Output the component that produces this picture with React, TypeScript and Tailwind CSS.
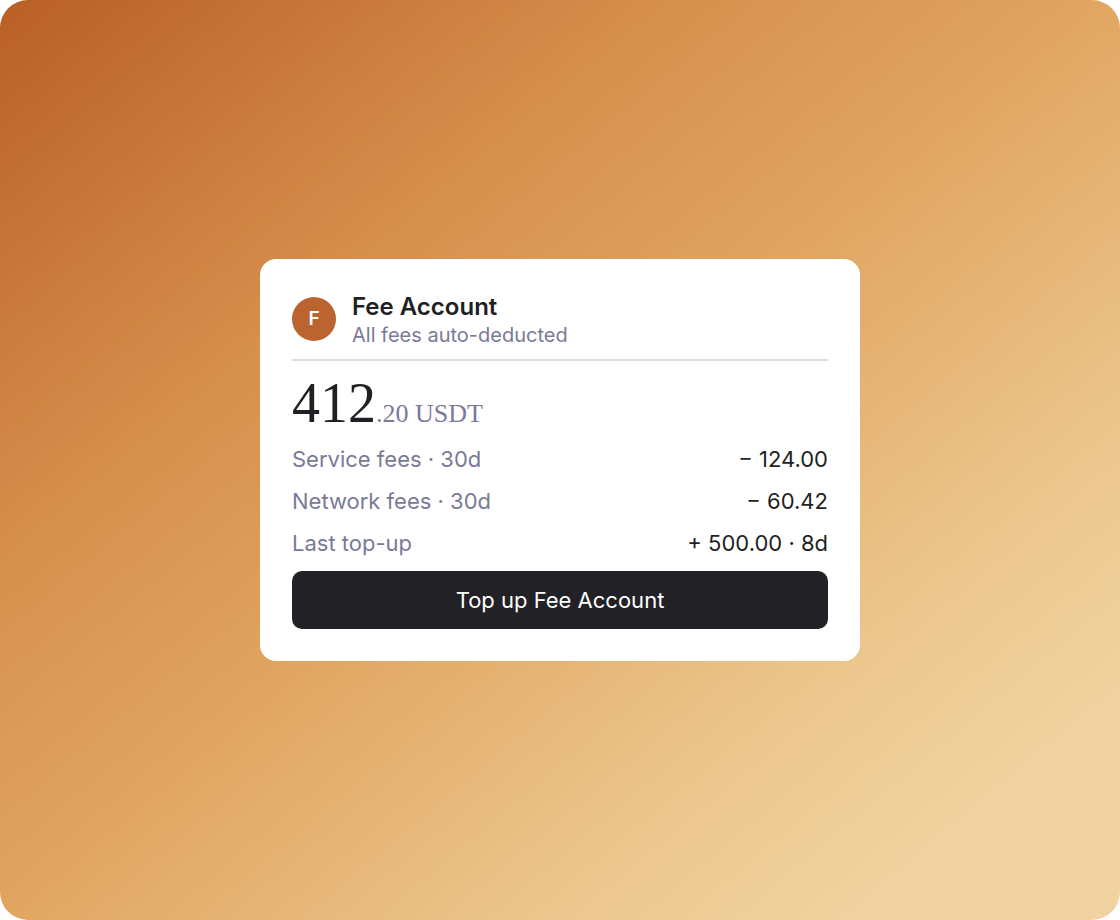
import React from "react";

const rows = [
  { label: "Service fees · 30d", value: "− 124.00" },
  { label: "Network fees · 30d", value: "− 60.42" },
  { label: "Last top-up", value: "+ 500.00 · 8d" },
];

export default function App() {
  return (
    <div
      className="w-[1120px] h-[920px] rounded-[28px] overflow-hidden flex items-center justify-center bg-[linear-gradient(140deg,#b95f26_0%,#d68f4d_30%,#e1a662_50%,#ebc48a_72%,#f0d3a0_88%)]"
      style={{ fontFamily: "Inter, 'Noto Sans', sans-serif" }}
    >
      <div className="w-[600px] bg-white rounded-2xl p-8 flex flex-col">
        {/* header */}
        <div className="flex items-center gap-4 pb-3 border-b-2 border-[#dcdce6]">
          <div className="w-11 h-11 rounded-full bg-[#bb6430] flex items-center justify-center text-white text-[19px] font-semibold">
            F
          </div>
          <div className="flex flex-col">
            <span className="text-[24px] font-semibold text-[#1f1f24] leading-[32px]">Fee Account</span>
            <span className="text-[20px] text-[#7a7a98] leading-[24px]">All fees auto-deducted</span>
          </div>
        </div>

        {/* balance */}
        <div
          className="mt-[14px] h-[56px] flex items-baseline"
          style={{ fontFamily: "'Liberation Serif', 'DejaVu Serif', serif" }}
        >
          <span className="text-[56px] leading-[56px] text-[#1f1f24]">412</span>
          <span className="text-[26px] leading-[26px] text-[#7a7a98]">.20 USDT</span>
        </div>

        {/* fee rows */}
        <div className="mt-[13px] flex flex-col gap-[12px]">
          {rows.map((r) => (
            <div key={r.label} className="flex items-center justify-between text-[22px] leading-[30px]">
              <span className="text-[#7a7a98]">{r.label}</span>
              <span className="text-[#1f1f24]">{r.value}</span>
            </div>
          ))}
        </div>

        <button className="mt-[13px] h-[58px] rounded-[10px] bg-[#212126] text-white text-[22px]">
          Top up Fee Account
        </button>
      </div>
    </div>
  );
}
